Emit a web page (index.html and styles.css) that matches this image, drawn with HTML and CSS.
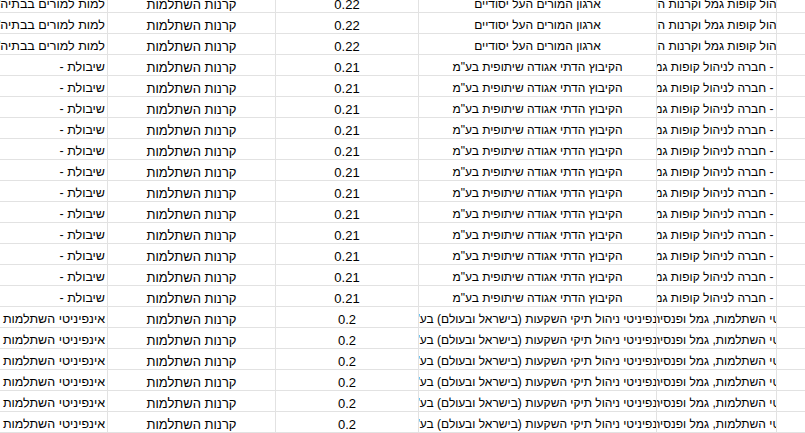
FILE: index.html
```html
<!DOCTYPE html>
<html lang="he" dir="rtl">
<head>
    <meta charset="UTF-8">
    <meta name="viewport" content="width=device-width, initial-scale=1.0">
    <title>קרנות השתלמות - דמי ניהול</title>
    <link rel="stylesheet" href="styles.css">
</head>
<body>

    <div class="sheet" id="sheet"></div>

    <script>
        // נתוני הגיליון (רק החלק הגלוי בחלון)
        const groups = [
            {
                count: 3,
                name: 'למות למורים בבתיה"',
                type: 'קרנות השתלמות',
                fee: '0.22',
                owner: 'ארגון המורים העל יסודיים',
                manager: 'ניהול קופות גמל וקרנות הש'
            },
            {
                count: 12,
                name: 'שיבולת -',
                type: 'קרנות השתלמות',
                fee: '0.21',
                owner: 'הקיבוץ הדתי אגודה שיתופית בע"מ',
                manager: 'ת - חברה לניהול קופות גמל'
            },
            {
                count: 6,
                name: 'אינפיניטי השתלמות',
                type: 'קרנות השתלמות',
                fee: '0.2',
                owner: 'אינפיניטי ניהול תיקי השקעות (בישראל ובעולם) בע"מ',
                manager: 'טי השתלמות, גמל ופנסיה'
            }
        ];

        window.addEventListener('load', () => {
            const sheet = document.getElementById('sheet');

            groups.forEach(g => {
                for (let i = 0; i < g.count; i++) {
                    const row = document.createElement('div');
                    row.className = 'row';
                    row.innerHTML =
                        '<div class="cell"></div>' +
                        '<div class="cell"><span>' + g.manager + '</span></div>' +
                        '<div class="cell"><span>' + g.owner + '</span></div>' +
                        '<div class="cell cell-num"><span>' + g.fee + '</span></div>' +
                        '<div class="cell cell-type"><span>' + g.type + '</span></div>' +
                        '<div class="cell cell-name"><span>' + g.name + '</span></div>';
                    sheet.appendChild(row);
                }
            });
        });
    </script>

</body>
</html>
```

FILE: styles.css
```css
html, body {
    margin: 0;
    padding: 0;
}
body {
    font-family: "Liberation Sans", Arial, sans-serif;
    font-size: 12px;
    color: #000;
    background: #fff;
    overflow: hidden;
}
.sheet {
    margin-top: -8px;
}
.row {
    display: grid;
    grid-template-columns: 29px 120px 238px 143px 168px 107px;
    height: 20px;
    border-bottom: 1px solid #e2e2e2;
}
.cell {
    display: flex;
    align-items: flex-end;
    justify-content: center;
    overflow: hidden;
    white-space: nowrap;
    line-height: 15px;
    border-left: 1px solid #e2e2e2;
}
.cell-num,
.cell-type {
    font-size: 13px;
}
.cell-name {
    justify-content: flex-start;
    padding-right: 2px;
    border-left: none;
    font-size: 12.5px;
}
```
